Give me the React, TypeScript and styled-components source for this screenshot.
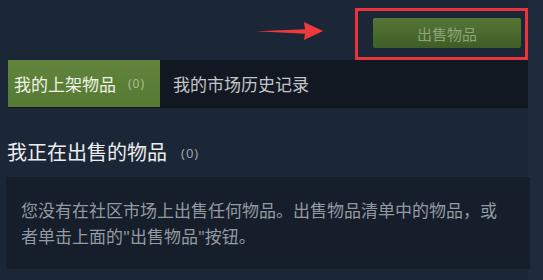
import React from "react";
import styled, { createGlobalStyle } from "styled-components";

const GlobalStyle = createGlobalStyle`
  html, body {
    margin: 0;
    padding: 0;
  }
  body {
    background: linear-gradient(to right, #1b2636 528px, #1d2b3c 528px);
    font-family: "Noto Sans", "Noto Sans CJK SC", sans-serif;
    width: 543px;
    height: 280px;
    overflow: hidden;
  }
`;

const Page = styled.div`
  display: flex;
  flex-direction: column;
  width: 543px;
`;

const TopBar = styled.div`
  display: flex;
  justify-content: flex-end;
  align-items: flex-start;
  height: 60px;
  padding-right: 15px;
`;

const Arrow = styled.svg`
  margin-top: 21px;
  margin-right: 31px;
  display: block;
`;

const Highlight = styled.div`
  margin-top: 8px;
  width: 173px;
  height: 52px;
  box-sizing: border-box;
  border: 3px solid #e8353b;
  padding: 7px 4px 9px 15px;
  display: flex;
`;

const SellButton = styled.button`
  flex: 1;
  height: 30px;
  border: none;
  border-radius: 2px;
  background: linear-gradient(to bottom, #567638 0%, #4a6a2e 50%, #3f5d26 100%);
  color: #8ea47a;
  font-family: "Noto Sans", "Noto Sans CJK SC", sans-serif;
  font-size: 15px;
  padding: 0;
  cursor: default;
`;

const Content = styled.div`
  display: flex;
  flex-direction: column;
  padding-left: 6px;
  width: 524px;
`;

const TabBar = styled.div`
  display: flex;
  height: 48px;
  margin: 0 2px;
  background: #111821;
  border-bottom: 1px solid #0e141c;
  box-sizing: border-box;
`;

const Tab = styled.div<{ $active?: boolean }>`
  display: flex;
  align-items: center;
  width: ${(p) => (p.$active ? "152px" : "auto")};
  box-sizing: border-box;
  padding-left: ${(p) => (p.$active ? "6px" : "13px")};
  font-size: 17px;
  color: ${(p) => (p.$active ? "#eef3e6" : "#c3c6c9")};
  background: ${(p) =>
    p.$active ? "linear-gradient(to bottom, #62843d 0%, #567a33 100%)" : "transparent"};
`;

const TabCount = styled.span`
  font-size: 12px;
  color: #a9bc92;
  margin-left: 12px;
  letter-spacing: 1px;
`;

const Heading = styled.h2`
  margin: 33px 0 12px 1px;
  font-size: 20px;
  line-height: 24px;
  font-weight: normal;
  color: #eceef0;
  display: flex;
  align-items: center;
`;

const HeadingCount = styled.span`
  font-size: 13px;
  color: #9aa2aa;
  margin-left: 14px;
  letter-spacing: 1px;
`;

const EmptyBox = styled.div`
  background: #151e2a;
  padding: 21px 24px 19px 15px;
  font-size: 17px;
  line-height: 26px;
  color: #939aa1;
`;

export default function App() {
  return (
    <>
      <GlobalStyle />
      <Page>
        <TopBar>
          <Arrow width="68" height="20" viewBox="0 0 68 20">
            <path d="M0 10.3 L49 8.2 L48 1 L67 10 L48 19 L49 12.8 Z" fill="#ee3a3d" />
          </Arrow>
          <Highlight>
            <SellButton>出售物品</SellButton>
          </Highlight>
        </TopBar>
        <Content>
          <TabBar>
            <Tab $active>
              我的上架物品<TabCount>(0)</TabCount>
            </Tab>
            <Tab>我的市场历史记录</Tab>
          </TabBar>
          <Heading>
            我正在出售的物品<HeadingCount>(0)</HeadingCount>
          </Heading>
          <EmptyBox>
            您没有在社区市场上出售任何物品。出售物品清单中的物品，或者单击上面的"出售物品"按钮。
          </EmptyBox>
        </Content>
      </Page>
    </>
  );
}
